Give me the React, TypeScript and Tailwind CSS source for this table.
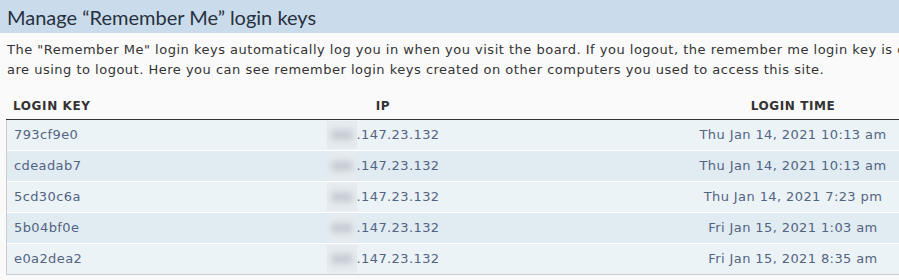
import React from "react";

const rows = [
  { key: "793cf9e0", time: "Thu Jan 14, 2021 10:13 am" },
  { key: "cdeadab7", time: "Thu Jan 14, 2021 10:13 am" },
  { key: "5cd30c6a", time: "Thu Jan 14, 2021 7:23 pm" },
  { key: "5b04bf0e", time: "Fri Jan 15, 2021 1:03 am" },
  { key: "e0a2dea2", time: "Fri Jan 15, 2021 8:35 am" },
];

function BlurredIp() {
  return (
    <span className="flex items-center justify-center">
      <span className="flex h-[28px] w-[30px] items-center justify-center bg-[#e6ebef]">
        <span className="h-[10px] w-[22px] rounded-sm bg-[#c4ccd3] blur-[3px]" />
      </span>
      <span>.147.23.132</span>
    </span>
  );
}

export default function App() {
  return (
    <div className="h-[280px] w-[899px] overflow-hidden bg-[#fafafa] font-['DejaVu_Sans',sans-serif] text-[#333]">
      <div className="flex h-[33px] items-center bg-[#cadceb] px-[7px]">
        <h2 className="font-['Lato','Open_Sans',sans-serif] text-[20px] leading-none text-[#28313f]">
          Manage “Remember Me” login keys
        </h2>
      </div>

      <div className="whitespace-nowrap px-[7px] pt-[7px] text-[13px] leading-[20px] tracking-[0.5px] text-[#333]">
        <p>
          The "Remember Me" login keys automatically log you in when you visit the board. If you logout, the remember me
          login key is deleted only on the computer you
        </p>
        <p>
          are using to logout. Here you can see remember login keys created on other computers you used to access this
          site.
        </p>
      </div>

      <div className="ml-[6px] mt-[12px] w-[1074px]">
        <div className="grid h-[28px] grid-cols-[254px_246px_574px] items-center border-b border-[#333] text-[12px] font-bold uppercase tracking-[0.6px] text-[#333]">
          <span className="pl-[7px]">Login key</span>
          <span className="text-center">IP</span>
          <span className="text-center">Login time</span>
        </div>
        <div className="border-l border-[#ccc]">
          {rows.map((r, i) => (
            <div
              key={r.key}
              className={`grid h-[31px] grid-cols-[253px_246px_574px] items-center border-b text-[13px] tracking-[0.4px] text-[#536482] ${
                i % 2 === 0 ? "bg-[#ecf3f7]" : "bg-[#e1ebf2]"
              } ${i === rows.length - 1 ? "border-[#c5cbd0]" : "border-white"}`}
            >
              <span className="pl-[7px]">{r.key}</span>
              <BlurredIp />
              <span className="text-center">{r.time}</span>
            </div>
          ))}
        </div>
      </div>
    </div>
  );
}
